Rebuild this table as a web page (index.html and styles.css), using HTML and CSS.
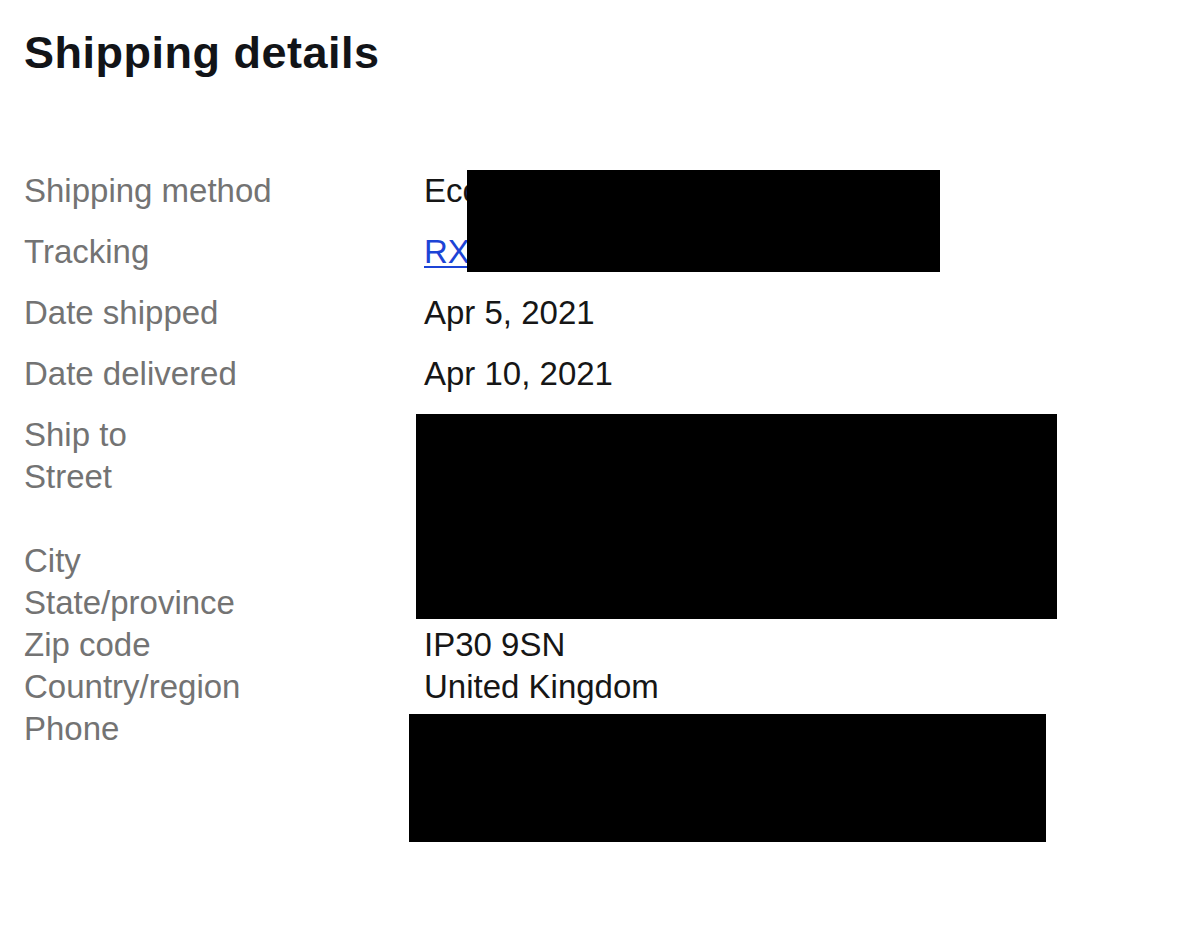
FILE: index.html
```html
<!DOCTYPE html>
<html lang="en">
<head>
<meta charset="utf-8">
<title>Shipping details</title>
<link rel="stylesheet" href="styles.css">
</head>
<body>
<main class="page">
  <h1 class="title">Shipping details</h1>
  <div class="details">
    <div class="row">
      <div class="label">Shipping method</div>
      <div class="value value-covered">
        Economy
        <span class="redact redact-method"></span>
      </div>
    </div>
    <div class="row">
      <div class="label">Tracking</div>
      <div class="value"><a class="link" href="#">RX</a></div>
    </div>
    <div class="row">
      <div class="label">Date shipped</div>
      <div class="value">Apr 5, 2021</div>
    </div>
    <div class="row">
      <div class="label">Date delivered</div>
      <div class="value">Apr 10, 2021</div>
    </div>
    <div class="row">
      <div class="label">
        <div>Ship to</div>
        <div>Street</div>
        <div class="blank"></div>
        <div>City</div>
        <div>State/province</div>
        <div>Zip code</div>
        <div>Country/region</div>
        <div>Phone</div>
      </div>
      <div class="value">
        <div class="redact redact-address"></div>
        <div>IP30 9SN</div>
        <div>United Kingdom</div>
        <div class="redact redact-phone"></div>
      </div>
    </div>
  </div>
</main>
</body>
</html>
```
FILE: styles.css
```css
* { box-sizing: border-box; }
html, body { margin: 0; padding: 0; background: #ffffff; }
body {
  font-family: "Liberation Sans", Arial, Helvetica, sans-serif;
  color: #161616;
}
.page {
  padding: 28px 0 0 24px;
}
.title {
  margin: 0;
  font-size: 45px;
  line-height: 50px;
  font-weight: 700;
  color: #121418;
  letter-spacing: 0.5px;
}
.details {
  margin-top: 82px;
  font-size: 33px;
  line-height: 42px;
}
.row {
  display: grid;
  grid-template-columns: 400px 1fr;
  padding: 9.5px 0;
}
.label {
  color: #737373;
}
.value {
  color: #161616;
}
.value-covered {
  position: relative;
}
.link {
  color: #1c44d6;
  text-decoration: underline;
  text-decoration-thickness: 2px;
  text-underline-offset: 3px;
}
.blank { height: 42px; }
.redact {
  display: block;
  background: #000;
}
.redact-method {
  position: absolute;
  left: 43px;
  top: 0.5px;
  width: 473px;
  height: 102px;
}
.redact-address {
  margin-left: -8px;
  width: 641px;
  height: 205px;
  margin-bottom: 5px;
}
.redact-phone {
  margin-left: -15px;
  margin-top: 6px;
  width: 637px;
  height: 128px;
}
```
